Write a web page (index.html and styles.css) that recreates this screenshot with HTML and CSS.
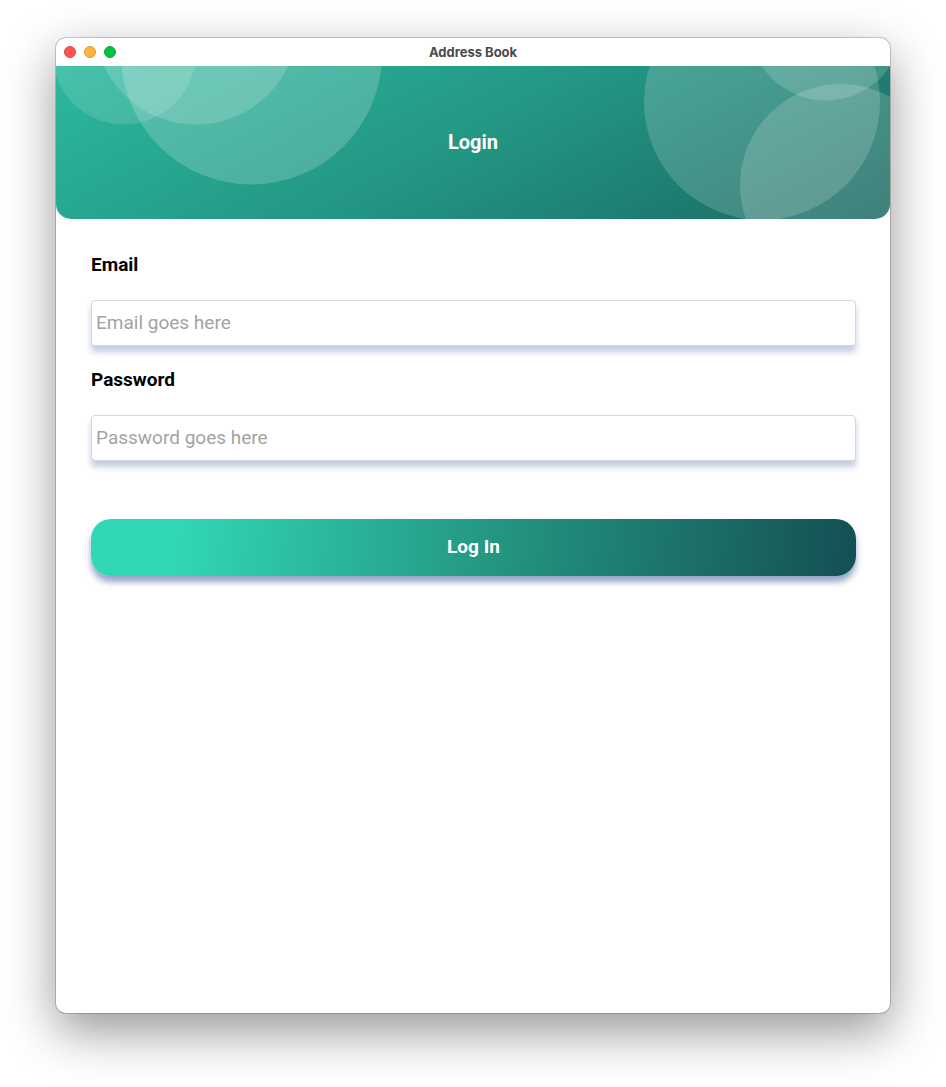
FILE: index.html
```html
<!DOCTYPE html>
<html lang="en">
<head>
<meta charset="utf-8">
<title>Address Book</title>
<link rel="stylesheet" href="styles.css">
</head>
<body>
<div class="window">
  <div class="titlebar">
    <div class="lights">
      <button class="light light-close" type="button" aria-label="Close"></button>
      <button class="light light-minimize" type="button" aria-label="Minimize"></button>
      <button class="light light-zoom" type="button" aria-label="Zoom"></button>
    </div>
    <div class="window-title">Address Book</div>
  </div>
  <header class="banner">
    <svg class="bubbles bubbles-left" width="340" height="154" aria-hidden="true">
      <circle cx="68" cy="-13.5" r="72" opacity=".13"/>
      <circle cx="140" cy="-43" r="101.5" opacity=".16"/>
      <circle cx="195.5" cy="-12" r="130.5" opacity=".19"/>
    </svg>
    <svg class="bubbles bubbles-right" width="260" height="154" aria-hidden="true">
      <circle cx="132" cy="36" r="118" opacity=".17"/>
      <circle cx="196" cy="-42.5" r="77" opacity=".17"/>
      <circle cx="211" cy="119" r="101" opacity=".17"/>
    </svg>
    <h1 class="banner-title">Login</h1>
  </header>
  <form class="form">
    <label class="label" for="email">Email</label>
    <input class="field" id="email" type="email" placeholder="Email goes here">
    <label class="label" for="password">Password</label>
    <input class="field" id="password" type="password" placeholder="Password goes here">
    <button class="submit" type="submit">Log In</button>
  </form>
</div>
</body>
</html>
```
FILE: styles.css
```css
* { box-sizing: border-box; }

body {
  margin: 0;
  min-height: 100vh;
  padding: 38px 56px 74px;
  display: flex;
  background: #fff;
  font-family: Roboto, "Liberation Sans", sans-serif;
}

.window {
  flex: 1;
  display: flex;
  flex-direction: column;
  overflow: hidden;
  border-radius: 10px;
  background: #fff;
  box-shadow: 0 0 0 1px rgba(0, 0, 0, .18), 0 18px 50px rgba(0, 0, 0, .42);
}

.titlebar {
  display: grid;
  grid-template-columns: 1fr auto 1fr;
  align-items: center;
  height: 28px;
  padding: 0 8px;
}

.lights { display: flex; gap: 8px; }

.light {
  width: 12px;
  height: 12px;
  padding: 0;
  border: 1px solid;
  border-radius: 50%;
}
.light-close { background: #ff5452; border-color: #e5403f; }
.light-minimize { background: #ffb43c; border-color: #df9a35; }
.light-zoom { background: #00c343; border-color: #0aa82f; }

.window-title {
  color: #4a4a4a;
  font: 700 13px/16px Inter, sans-serif;
}

.banner {
  position: relative;
  display: flex;
  align-items: center;
  justify-content: center;
  height: 153px;
  padding-bottom: 2px;
  overflow: hidden;
  border-radius: 0 0 15px 15px;
  background: linear-gradient(152deg, #2cb99e, #239683 50%, #196760);
}

.bubbles { position: absolute; top: 0; fill: #fff; }
.bubbles-left { left: 0; }
.bubbles-right { right: 0; }

.banner-title {
  position: relative;
  margin: 0;
  color: #fff;
  font-size: 20px;
  line-height: 24px;
  font-weight: 700;
}

.form {
  display: flex;
  flex-direction: column;
  padding: 34px 34px 40px 35px;
}

.label {
  margin-bottom: 23px;
  color: #000;
  font-size: 19px;
  line-height: 24px;
  font-weight: 700;
}

.field {
  width: 100%;
  height: 46px;
  margin-bottom: 22px;
  padding: 0 4px 2px;
  border: 1px solid #d6d6d8;
  border-radius: 4px;
  background: #fff;
  box-shadow: 0 6px 6px rgba(65, 100, 170, .32);
  color: #000;
  font: 400 19px/24px Roboto, sans-serif;
}
.field::placeholder { color: #a3a3a3; opacity: 1; }

.submit {
  height: 57px;
  margin-top: 36px;
  padding: 0 0 2px;
  border: 0;
  border-radius: 20px;
  background: linear-gradient(95deg, #31d6b4 12%, #239480 54%, #144f53);
  box-shadow: 0 6px 6px rgba(45, 75, 150, .5);
  color: #fff;
  font: 700 19px/24px Roboto, sans-serif;
}
```
